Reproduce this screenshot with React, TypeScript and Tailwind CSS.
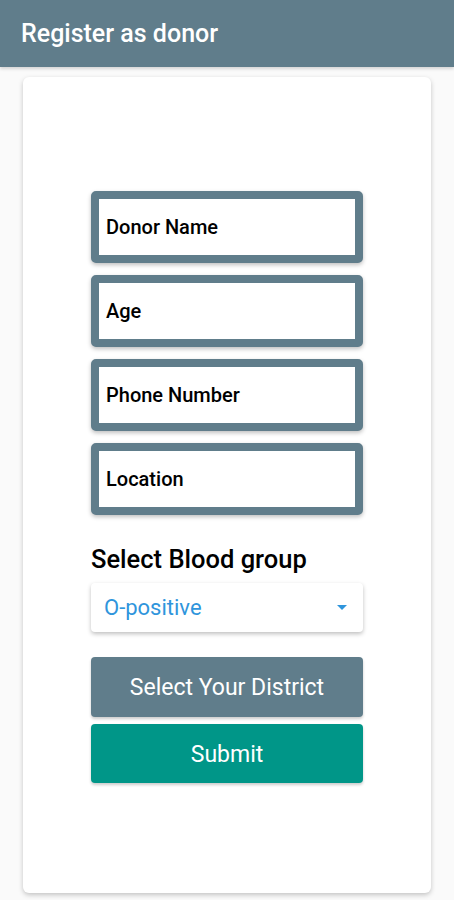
import React from "react";

const font = { fontFamily: "Roboto, 'Noto Sans', sans-serif" };

function Field({ label }: { label: string }) {
  return (
    <div className="h-[72px] w-full rounded-[5px] border-[8px] border-[#607d8b] bg-white shadow-[0_2px_4px_rgba(0,0,0,0.25)] flex items-center pl-[7px]">
      <span className="text-[20px] font-medium text-black leading-[24px]">{label}</span>
    </div>
  );
}

export default function App() {
  return (
    <div className="min-h-[900px] w-[454px] bg-[#fafafa]" style={font}>
      <div className="h-[67px] bg-[#607d8b] flex items-center pl-[21px] shadow-[0_2px_3px_rgba(0,0,0,0.15)]">
        <span className="text-[25px] font-medium text-white leading-[30px]">Register as donor</span>
      </div>
      <div className="mx-[23px] mt-[10px] h-[816px] rounded-[6px] bg-white shadow-[0_2px_5px_rgba(0,0,0,0.22)] flex flex-col items-center pt-[114px]">
        <div className="w-[272px] flex flex-col gap-[12px]">
          <Field label="Donor Name" />
          <Field label="Age" />
          <Field label="Phone Number" />
          <Field label="Location" />
        </div>
        <div className="w-[272px] mt-[28px] text-[25.5px] font-medium leading-[32px] text-black">
          Select Blood group
        </div>
        <div className="w-[272px] mt-[8px] h-[49px] rounded-[4px] bg-white shadow-[0_2px_4px_rgba(0,0,0,0.25)] flex items-center justify-between pl-[13px] pr-[16px]">
          <span className="text-[22px] text-[#2f95dc] leading-[28px] pt-[1px]">O-positive</span>
          <svg width="10" height="6" viewBox="0 0 10 6">
            <path d="M0 0 L10 0 L5 5 Z" fill="#2f95dc" />
          </svg>
        </div>
        <button className="w-[272px] mt-[25px] h-[60px] rounded-[4px] bg-[#607d8b] text-white text-[23px] pt-[3px] shadow-[0_2px_3px_rgba(0,0,0,0.2)]">
          Select Your District
        </button>
        <button className="w-[272px] mt-[7px] h-[59px] rounded-[4px] bg-[#009688] text-white text-[23px] pt-[3px] shadow-[0_2px_3px_rgba(0,0,0,0.2)]">
          Submit
        </button>
      </div>
    </div>
  );
}
